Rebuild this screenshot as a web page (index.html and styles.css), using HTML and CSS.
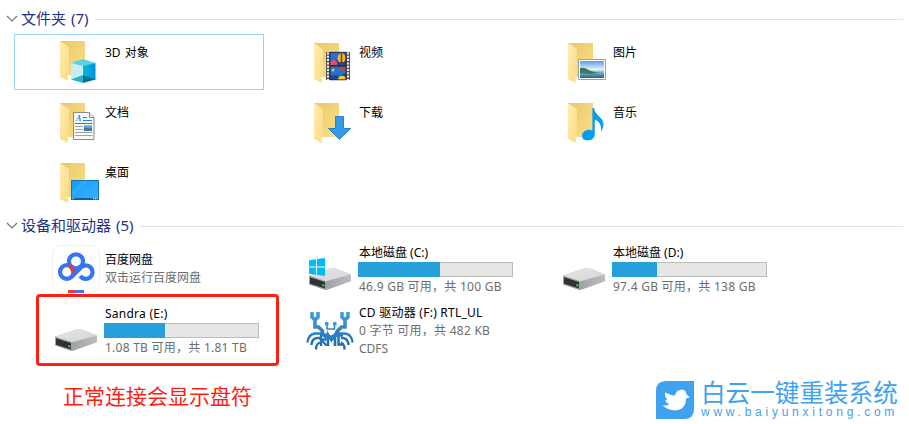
FILE: index.html
```
<!DOCTYPE html>
<html lang="zh-CN">
  <head>
    <meta charset="utf-8">
    <title>此电脑</title>
    <link rel="stylesheet" href="styles.css">
  </head>
  <body>
    <svg class="defs" width="0" height="0">
      <defs>
        <linearGradient id="back" x1="0" y1="0" x2="1" y2="1">
          <stop offset="0" stop-color="#e9c866"/>
          <stop offset="1" stop-color="#fcdf8c"/>
        </linearGradient>
        <linearGradient id="flap" x1="0" y1="0" x2="1" y2="1">
          <stop offset="0" stop-color="#ffedb4"/>
          <stop offset="1" stop-color="#fbdb82"/>
        </linearGradient>
        <linearGradient id="lid" x1="0" y1="0" x2="1" y2="1">
          <stop offset="0" stop-color="#e8e8ea"/>
          <stop offset="1" stop-color="#d2d3d6"/>
        </linearGradient>
        <linearGradient id="side" x1="0" y1="0" x2="1" y2="0">
          <stop offset="0" stop-color="#8f9093"/>
          <stop offset="1" stop-color="#bcbdc0"/>
        </linearGradient>
        <linearGradient id="sky" x1="0" y1="0" x2="0" y2="1">
          <stop offset="0" stop-color="#5b9be8"/>
          <stop offset=".5" stop-color="#e2f1fb"/>
          <stop offset=".65" stop-color="#7fb5cf"/>
          <stop offset="1" stop-color="#25628f"/>
        </linearGradient>
        <linearGradient id="cubeRight" x1="0" y1="0" x2="1" y2="0">
          <stop offset="0" stop-color="#00bcd8"/>
          <stop offset="1" stop-color="#0093dc"/>
        </linearGradient>
        <linearGradient id="screen" x1="0" y1="0" x2="1" y2="1">
          <stop offset="0" stop-color="#109bf8"/>
          <stop offset="1" stop-color="#3db2ff"/>
        </linearGradient>
        <linearGradient id="crab" gradientUnits="userSpaceOnUse" x1="0" y1="6" x2="0" y2="44">
          <stop offset="0" stop-color="#43a0da"/>
          <stop offset="1" stop-color="#1b65aa"/>
        </linearGradient>
      </defs>
      <symbol id="folder" viewBox="0 0 48 48">
        <path d="M8 5h25v34H16z" fill="url(#back)"/>
        <path d="M8 5l8 5.200q.9.600.9 1.800v26.600l-1.200.6V45L8 41z" fill="url(#flap)"/>
      </symbol>
      <symbol id="drive" viewBox="0 0 48 48">
        <path d="M3 30.800L25 23.300Q27 22.700 29 23.200L45 29.600V36.200L22 44.600Q20 45.200 18 44.500L3 39.300z" fill="url(#side)"/>
        <path d="M3 30.800L25 23.300Q27 22.700 29 23.200L45 29.600 20 36.300z" fill="url(#lid)"/>
        <path d="M3 30.800l17 5.500v8.700l-17-5.700z" fill="#a2a3a6"/>
        <path d="M4 32.200l15 4.800v6.400L4 38.800z" fill="#2f3133"/>
        <path d="M16.300 39.100l2.100.6v2l-2.100-.6z" fill="#2be04a"/>
      </symbol>
    </svg>

    <div class="group">
      <svg class="arrow" width="12" height="8" viewBox="0 0 12 8"><path d="M1 1l5 5 5-5"/></svg>
      <h2>文件夹 (7)</h2>
    </div>
    <div class="tiles">
      <div class="tile selected">
        <svg class="icon" viewBox="0 0 48 48">
          <use href="#folder" y="-2" width="48" height="48"/>
          <path d="M32 45l14-4-3-2z" fill="#e6e6e6"/>
          <path d="M31 21l12.500 4L31 29l-12-4z" fill="#5fd0e4"/>
          <path d="M19 25L31 28v9.500L19 42z" fill="#c3eef2"/>
          <path d="M43.500 25L31 28v9.500L43.500 42z" fill="url(#cubeRight)"/>
          <path d="M19 41.500L31 37v8z" fill="#25b3c7"/>
          <path d="M43.500 41.500L31 37v8z" fill="#08728c"/>
        </svg>
        <div class="name">3D 对象</div>
      </div>
      <div class="tile">
        <svg class="icon" viewBox="0 0 48 48">
          <use href="#folder" width="48" height="48"/>
          <path d="M20 14h24v28H20z" fill="#555"/>
          <path d="M24 14.500h16v13H24zM24 28.500h16v13.300H24z" fill="#2371d2"/>
          <path d="M24 24l5-3 5 4 6-2v4.500H24zM24 38l5-1 4 1 7-3v6.800H24z" fill="#1c479a"/>
          <path d="M24 24l4-3 3 3v3h-7z" fill="#e0506c"/>
          <ellipse cx="35.500" cy="20" rx="4" ry="4.500" fill="#f0bd20"/>
          <path d="M35.500 15.500v9M33.500 25h4" stroke="#7b2e21" stroke-width="1.400"/>
          <path d="M33 30h7l-3 4z" fill="#bd4837"/>
          <circle cx="27" cy="32" r="1.500" fill="#e9c43a"/>
          <path d="M32 41.800q0-4 4-4t4 4z" fill="#f6cd23"/>
          <path d="M22 14.500v28M42 14.500v28" stroke="#f0f0f0" stroke-width="2" stroke-dasharray="2 1.300"/>
          <path d="M24 14.300h16v13.500H24zm0 13.500h16v14H24z" fill="none" stroke="#20252e" stroke-width=".8"/>
        </svg>
        <div class="name">视频</div>
      </div>
      <div class="tile">
        <svg class="icon" viewBox="0 0 48 48">
          <use href="#folder" width="48" height="48"/>
          <path d="M18.500 21.500h27v20h-27z" fill="#fff" stroke="#a0a0a0"/>
          <path d="M20 23h24v17H20z" fill="url(#sky)"/>
          <path d="M20 30q4-1 8 1.500t11 3l-8 1.500-11-1z" fill="#3d7a57"/>
        </svg>
        <div class="name">图片</div>
      </div>
      <div class="tile">
        <svg class="icon" viewBox="0 0 48 48">
          <use href="#folder" width="48" height="48"/>
          <path d="M21.500 14.500h16l4.500 5v22H21.500z" fill="#f9f9f9" stroke="#8b8b8b"/>
          <path d="M37.500 14.500v5H42" fill="#e8e8e8" stroke="#8b8b8b"/>
          <path d="M31 19.500h4M31 22.500h9M23 25.500h17.500" stroke="#1a86d9"/>
          <path d="M23 28.500h8M23 31.500h8M23 34.500h17.500M23 37.500h17.500" stroke="#a2a2a2"/>
          <path d="M32 27.500h8v5.500h-8z" fill="#3d7d9c"/>
          <path d="M32 27.500h8v2l-4 .5-4-1z" fill="#6babeb"/>
          <text x="24" y="23" class="letter">A</text>
        </svg>
        <div class="name">文档</div>
      </div>
      <div class="tile">
        <svg class="icon" viewBox="0 0 48 48">
          <use href="#folder" width="48" height="48"/>
          <path d="M29.500 18.500h8v12h7L33.500 41.300 22.500 30.500h7z" fill="#3898e8" stroke="#2383d0"/>
        </svg>
        <div class="name">下载</div>
      </div>
      <div class="tile">
        <svg class="icon" viewBox="0 0 48 48">
          <use href="#folder" width="48" height="48"/>
          <path d="M32.400 10h1.700c.5 7 9.400 9.500 9.400 16 0 3-1 5.500-2.600 8 1-5.500-.7-10.500-6.100-12.500V36c0 4-3.300 6.400-7.200 6.400-3.200 0-5.600-1.700-5.600-4.600 0-3.700 3.600-6 7.300-6 1.200 0 2.200.2 3.100.7z" fill="#079cf3"/>
        </svg>
        <div class="name">音乐</div>
      </div>
      <div class="tile">
        <svg class="icon" viewBox="0 0 48 48">
          <use href="#folder" width="48" height="48"/>
          <path d="M19.500 22.500h27v19h-27z" fill="url(#screen)" stroke="#1272b5"/>
          <path d="M20 39.500L36 23h-5L20 34z" fill="#55bbff" opacity=".3"/>
          <path d="M19 40h28v2H19z" fill="#0c609c"/>
          <path d="M20.500 40.700h1.500M41 40.700h5" stroke="#fff" stroke-dasharray="1.200 .6"/>
        </svg>
        <div class="name">桌面</div>
      </div>
    </div>

    <div class="group">
      <svg class="arrow" width="12" height="8" viewBox="0 0 12 8"><path d="M1 1l5 5 5-5"/></svg>
      <h2>设备和驱动器 (5)</h2>
    </div>
    <div class="tiles devices">
      <div class="tile">
        <svg class="icon" viewBox="0 0 48 48">
          <rect x=".5" y=".5" width="47" height="47" rx="9" fill="#fff" stroke="#f1f1f1"/>
          <g fill="none" stroke="#3574f5" stroke-width="4.200">
            <circle cx="24" cy="16.300" r="7"/>
            <circle cx="14.800" cy="27" r="6.800"/>
            <path d="M19.500 32l9.300-9.500a6.800 6.800 0 1 1-.6 8.500"/>
          </g>
          <path d="M17 18.500q5.500 3 6 8.200l-4 3.800q1.200-5.500-3-8.500z" fill="#d8423b"/>
          <path d="M16 45h8v3h-8z" fill="#e63a3b"/>
          <path d="M24 45h8v3h-8z" fill="#3d78fa"/>
        </svg>
        <div class="info app">
          <div>百度网盘</div>
          <div class="sub">双击运行百度网盘</div>
        </div>
      </div>
      <div class="tile">
        <svg class="icon" viewBox="0 0 48 48">
          <use href="#drive" width="48" height="48"/>
          <path d="M3 15.200l7-1v7.300H3zM11 14l8-1v8.500h-8zM3 22.500h7v7.200l-7-.9zM11 22.500h8V31l-8-1.200z" fill="#00bcf2"/>
        </svg>
        <div class="info">
          <div>本地磁盘 (C:)</div>
          <div class="bar"><div class="used" style="width: 53%"></div></div>
          <div class="sub wide">46.9 GB 可用，共 100 GB</div>
        </div>
      </div>
      <div class="tile">
        <svg class="icon" viewBox="0 0 48 48"><use href="#drive" width="48" height="48"/></svg>
        <div class="info">
          <div>本地磁盘 (D:)</div>
          <div class="bar"><div class="used" style="width: 29%"></div></div>
          <div class="sub wide">97.4 GB 可用，共 138 GB</div>
        </div>
      </div>
      <div class="tile marked">
        <svg class="icon" viewBox="0 0 48 48"><use href="#drive" width="48" height="48"/></svg>
        <div class="info">
          <div class="wide">Sandra (E:)</div>
          <div class="bar"><div class="used" style="width: 39.4%"></div></div>
          <div class="sub wide">1.08 TB 可用，共 1.81 TB</div>
        </div>
      </div>
      <div class="tile">
        <svg class="icon" viewBox="0 0 48 48">
          <g fill="none" stroke="url(#crab)">
            <path d="M6 6v5l3 3 3-3V6M9 13v8h3.500l4 4v5" stroke-width="3.600"/>
            <path d="M42 6v5l-3 3-3-3V6M39 13v8h-3.500l-4 4v5" stroke-width="3.600"/>
            <path d="M15 27.500H9q-7 1-7.500 9M14 32h-3q-5 .5-5.500 7M14 36.500q-4 1-4 7" stroke-width="2.300"/>
            <path d="M33 27.500h6q7 1 7.500 9M35 32h2q5 .5 5.500 7M35 36.500q3.500 1 3.500 7" stroke-width="2.300"/>
            <path d="M15 40V29h4.500v4.500H15l5.500 6" stroke-width="2.300"/>
            <path d="M22 40V28.500l3.500 5.500 3.500-5.500V40M37 29.500h-4.500V38.500H37" stroke-width="2.600"/>
            <path d="M21 18v5h7.500v-5" stroke-width="1.600"/>
          </g>
          <path d="M15 26l9.500 3.500L33 26v4l-8.500 3.500L15 30z" fill="#2c80c0"/>
          <circle cx="20.700" cy="17.700" r="2" fill="#3c96d0"/>
          <circle cx="28.800" cy="17.700" r="2" fill="#3c96d0"/>
        </svg>
        <div class="info">
          <div class="wide">CD 驱动器 (F:) RTL_UL</div>
          <div class="sub wide">0 字节 可用，共 482 KB</div>
          <div class="sub">CDFS</div>
        </div>
      </div>
    </div>

    <div class="footer">
      <div class="note">正常连接会显示盘符</div>
      <div class="brand">
        <svg class="logo" width="38" height="38" viewBox="0 0 38 38">
          <path d="M10 0h28v28q0 10-10 10H0V10Q0 0 10 0z" fill="#3fa2ef"/>
          <path d="M9 11.500q5 2.500 9 3 1.500-.5 2-2.500 1-3 6-3.500 4 .5 4.500 5l3.500 3-3.800.8Q30 25 25 28q-9 4-18.500-3.500 4.500.5 7-1.500-3.500-1-4.500-4l2.500-.2Q8.500 16 9 11.500z" fill="#fff"/>
        </svg>
        <div class="brand-text">
          <div class="brand-name">白云一键重装系统</div>
          <div class="brand-url">www.baiyunxitong.com</div>
        </div>
      </div>
    </div>
  </body>
</html>
```

FILE: styles.css
```
* {
  box-sizing: border-box;
}

body {
  margin: 0;
  padding: 4px 6px 0;
  height: 424px;
  overflow: hidden;
  background-color: #fff;
  color: #000;
  font: 12px/18px "Noto Sans", "Noto Sans CJK SC", sans-serif;
}

.defs {
  display: block;
}

.group {
  display: flex;
  align-items: center;
  height: 30px;
}
.group::after {
  content: "";
  flex: 1;
  height: 1px;
  margin-left: 7px;
  background-color: #e2e2e2;
}
.group h2 {
  margin: -2px 0 0 3px;
  color: #1e3287;
  font-size: 15px;
  font-weight: normal;
  line-height: 30px;
  word-spacing: 1px;
}

.arrow path {
  fill: none;
  stroke: #777;
  stroke-width: 1.2;
}

.tiles {
  display: grid;
  grid-template-columns: repeat(3, 250px);
  grid-auto-rows: 56px;
  gap: 4px;
  margin: 0 0 1px 8px;
}
.devices {
  row-gap: 5px;
}

.tile {
  position: relative;
  display: flex;
  align-items: center;
  padding-left: 38px;
  white-space: nowrap;
}
.selected {
  padding-left: 37px;
  border: 1px solid #99d1ff;
}
.marked::before {
  content: "";
  box-sizing: border-box;
  position: absolute;
  left: 22px;
  top: -8px;
  width: 243px;
  height: 72px;
  border: 3px solid #ff1e14;
  border-radius: 4px;
}

.icon {
  flex: none;
  width: 48px;
  height: 48px;
}
.letter {
  fill: #1a86d9;
  font: italic bold 8px "Liberation Serif", serif;
}

.name {
  align-self: flex-start;
  margin: 10px 0 0 5px;
  word-spacing: 1px;
}
.selected .name {
  margin-top: 9px;
}

.info {
  margin: 1px 0 0 5px;
}
.app {
  margin-top: -1px;
}
.sub {
  color: #6d6d6d;
}
.wide {
  letter-spacing: .25px;
}

.bar {
  width: 155px;
  height: 15px;
  margin: 0 0 1px -1px;
  background-color: #e6e6e6;
  box-shadow: inset 0 0 0 1px #bcbcbc;
}
.used {
  height: 100%;
  background-color: #26a0da;
}

.footer {
  display: flex;
  justify-content: space-between;
  margin: 21px 5px 0 57px;
}

.note {
  color: #ff1e14;
  font-size: 21px;
  line-height: 35px;
}

.brand {
  display: flex;
  color: #3fa2ef;
}
.logo {
  margin: 2px 7px 0 0;
}
.brand-text {
  width: 197px;
  white-space: nowrap;
}
.brand-name {
  font-size: 24.6px;
  line-height: 27px;
}
.brand-url {
  font: 12px/12px "Liberation Sans", Arial, sans-serif;
  letter-spacing: 3.75px;
}
```
